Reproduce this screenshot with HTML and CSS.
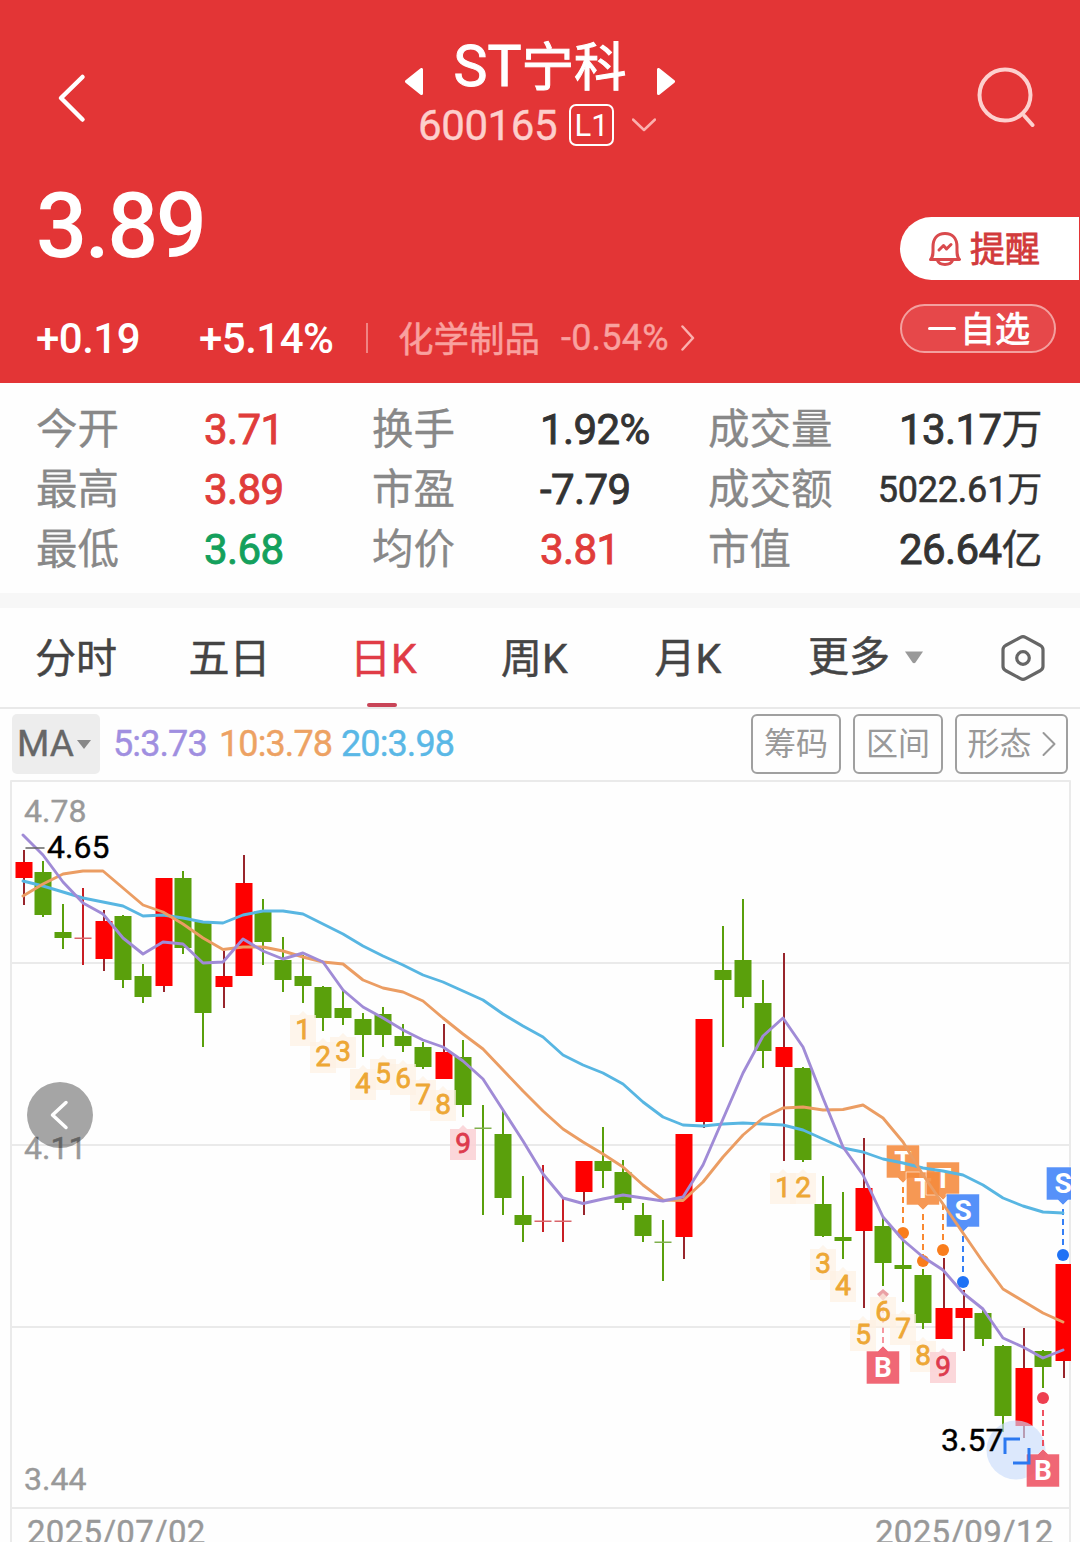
FILE: index.html
```html
<!DOCTYPE html>
<html lang="zh-CN">
<head>
    <meta charset="UTF-8">
    <meta name="viewport" content="width=device-width, initial-scale=1.0">
    <title>ST宁科 600165</title>
    <link rel="stylesheet" href="styles.css">
</head>
<body>
    <header class="header">
        <div class="topbar">
            <svg class="back" width="32" height="52" viewBox="0 0 32 52"><path d="M27.500 5 L6 26 L27.500 47.500"/></svg>
            <div class="stock">
                <div class="stock-name">
                    <svg class="arrow" width="18" height="27" viewBox="0 0 18 27"><path d="M16.500 1.500 V25.500 L1.500 13.500 Z"/></svg>
                    <h1>ST<span>宁科</span></h1>
                    <svg class="arrow" width="18" height="27" viewBox="0 0 18 27"><path d="M1.500 1.500 V25.500 L16.500 13.500 Z"/></svg>
                </div>
                <div class="stock-code">
                    <span class="code">600165</span>
                    <span class="level">L1</span>
                    <svg class="down" width="24" height="14" viewBox="0 0 24 14"><path d="M1 1.500 L12 12 L23 1.500"/></svg>
                </div>
            </div>
            <svg class="search" width="62" height="62" viewBox="0 0 62 62"><circle cx="29" cy="30" r="25.500"/><path d="M48.500 51 L56.500 60"/></svg>
        </div>

        <div class="quote">
            <div class="quote-left">
                <div class="price">3.89</div>
                <div class="changes">
                    <span class="change">+0.19</span>
                    <span class="percent">+5.14%</span>
                    <i class="divider"></i>
                    <span class="industry">化学制品</span>
                    <span class="industry-change">-0.54%</span>
                    <svg class="more" width="14" height="26" viewBox="0 0 14 26"><path d="M1.500 1.500 L12 13 L1.500 24.500"/></svg>
                </div>
            </div>
            <div class="quote-right">
                <div class="remind">
                    <svg width="34" height="36" viewBox="0 0 34 36">
                        <path d="M2.500 28.500 C5.500 25.500 5 22 5 16 C5 7.500 9.500 2.500 17 2.500 C24.500 2.500 29 7.500 29 16 C29 22 28.500 25.500 31.500 28.500 Z"/>
                        <path d="M9.500 29.500 C11.500 34.700 22.500 34.700 24.500 29.500"/>
                        <path d="M11 19 L15.500 14.500 L18.500 18 L23 13.500"/>
                    </svg>
                    <span>提醒</span>
                </div>
                <div class="favorite"><i></i><span>自选</span></div>
            </div>
        </div>
    </header>

    <section class="stats">
        <span class="label">今开</span><span class="value up">3.71</span>
        <span class="label">换手</span><span class="value">1.92%</span>
        <span class="label">成交量</span><span class="value last">13.17<b>万</b></span>
        <span class="label">最高</span><span class="value up">3.89</span>
        <span class="label">市盈</span><span class="value">-7.79</span>
        <span class="label">成交额</span><span class="value last small">5022.61<b>万</b></span>
        <span class="label">最低</span><span class="value fall">3.68</span>
        <span class="label">均价</span><span class="value up">3.81</span>
        <span class="label">市值</span><span class="value last">26.64<b>亿</b></span>
    </section>

    <nav class="tabs">
        <span class="tab">分时</span>
        <span class="tab">五日</span>
        <span class="tab active">日K</span>
        <span class="tab">周K</span>
        <span class="tab">月K</span>
        <span class="tab tab-more">更多<svg width="22" height="15" viewBox="0 0 22 15"><path d="M2 1.500 H20 L12.500 12.500 Q11 14 9.500 12.500 Z"/></svg></span>
        <svg class="setting" width="46" height="50" viewBox="0 0 46 50">
            <path d="M20.500 4.400 Q23 3 25.500 4.400 L40.500 12.500 Q43 14 43 16.700 V33.300 Q43 36 40.500 37.500 L25.500 45.600 Q23 47 20.500 45.600 L5.500 37.500 Q3 36 3 33.300 V16.700 Q3 14 5.500 12.500 Z"/>
            <circle cx="23" cy="25" r="6.300"/>
        </svg>
    </nav>

    <section class="indicator">
        <div class="ma-select">MA<svg width="14" height="9" viewBox="0 0 14 9"><path d="M0 0 H14 L7 9 Z"/></svg></div>
        <span class="ma ma5">5:3.73</span>
        <span class="ma ma10">10:3.78</span>
        <span class="ma ma20">20:3.98</span>
        <div class="tools">
            <span class="tool">筹码</span>
            <span class="tool">区间</span>
            <span class="tool tool-wide">形态<svg width="14" height="26" viewBox="0 0 14 26"><path d="M1.500 2 L12.500 13 L1.500 24"/></svg></span>
        </div>
    </section>

    <svg class="chart" id="chart" width="1080" height="764" viewBox="0 778 1080 764"></svg>

    <script src="chart.js"></script>
</body>
</html>
```
FILE: styles.css
```css
body {
    margin: 0;
    width: 1080px;
    height: 1542px;
    overflow: hidden;
    background-color: #fefefe;
    color: #333;
    font-family: Roboto, "Noto Sans CJK SC", sans-serif;
}

svg {
    display: block;
    flex: none;
    fill: none;
    stroke-linecap: round;
    stroke-linejoin: round;
}

/* header */
.header {
    height: 383px;
    background-color: #e33536;
    color: #fff;
}

.topbar {
    display: flex;
    justify-content: space-between;
    height: 180px;
    padding: 0 42px 0 55px;
}

.back {
    margin-top: 72px;
    stroke: #fff;
    stroke-width: 4.5;
}

.stock {
    width: 270px;
    padding: 37px 0 0 17px;
}

.stock-name {
    display: flex;
    justify-content: space-between;
    height: 60px;
}

.arrow {
    margin-top: 31px;
    fill: #fff;
    stroke: #fff;
    stroke-width: 3;
}

h1 {
    margin: 0;
    font-size: 57px;
    font-weight: 400;
    line-height: 60px;
    white-space: nowrap;
    -webkit-text-stroke: 1px currentColor;
}

h1 span {
    font-size: 52.5px;
}

.stock-code {
    display: flex;
    align-items: center;
    height: 44px;
    margin-top: 6px;
    padding-left: 13px;
}

.code {
    width: 151px;
    font-size: 42px;
    letter-spacing: -0.4px;
    color: #fdcfcc;
    -webkit-text-stroke: 0.4px currentColor;
}

.level {
    box-sizing: border-box;
    width: 45px;
    height: 42px;
    border: 2px solid #fff;
    border-radius: 7px;
    font-size: 31px;
    line-height: 40px;
    text-align: center;
}

.down {
    margin-left: 18px;
    stroke: #fbb0ae;
    stroke-width: 2.5;
}

.search {
    margin-top: 65px;
    stroke: #fdd0ce;
    stroke-width: 4;
}

.quote {
    display: flex;
    justify-content: space-between;
}

.quote-left {
    padding-left: 36px;
}

.price {
    height: 92px;
    padding-top: 1px;
    box-sizing: border-box;
    font-size: 90px;
    font-weight: 500;
    line-height: 92px;
    letter-spacing: -2.5px;
}

.changes {
    display: flex;
    align-items: center;
    height: 44px;
    margin-top: 44px;
    font-size: 42px;
    font-weight: 500;
    letter-spacing: -0.5px;
}

.change {
    width: 163px;
}

.percent {
    width: 167px;
}

.divider {
    width: 2px;
    height: 30px;
    background-color: #f08483;
}

.industry {
    width: 163px;
    margin: -4px 0 0 30px;
    font-size: 35.5px;
    font-weight: 400;
    letter-spacing: 0;
    color: #f9a19f;
    -webkit-text-stroke: 0.5px currentColor;
}

.industry-change {
    width: 120px;
    font-size: 36px;
    font-weight: 400;
    letter-spacing: 0.2px;
    color: #f9a19f;
    -webkit-text-stroke: 0.4px currentColor;
}

.more {
    stroke: #fbb0ae;
    stroke-width: 2.5;
}

.quote-right {
    width: 180px;
    padding-top: 37px;
}

.remind {
    display: flex;
    align-items: center;
    box-sizing: border-box;
    width: 179px;
    height: 63px;
    padding-left: 28px;
    border-radius: 32px 0 0 32px;
    background-color: #fff;
    color: #d23a3b;
    font-size: 35px;
}

.remind svg {
    margin-right: 8px;
    stroke: #d94a4d;
    stroke-width: 3;
}

.remind span,
.favorite span {
    margin-top: -4px;
    -webkit-text-stroke: 0.8px currentColor;
}

.favorite {
    display: flex;
    align-items: center;
    box-sizing: border-box;
    width: 156px;
    height: 49px;
    margin-top: 24px;
    padding-left: 26px;
    border: 2px solid #f3a09f;
    border-radius: 25px;
    background-color: #e6484a;
    font-size: 35px;
}

.favorite i {
    width: 28px;
    height: 3px;
    margin-right: 4px;
    border-radius: 2px;
    background-color: #fff;
}

/* stats */
.stats {
    display: grid;
    grid-template-columns: 168px 168px 168px 168px 172px 162px;
    grid-auto-rows: 60px;
    align-items: center;
    height: 193px;
    padding: 17px 0 0 36px;
    border-bottom: 15px solid #f7f7f7;
    background-color: #fefefe;
}

.stats span {
    height: 60px;
    line-height: 60px;
    white-space: nowrap;
}

.label {
    font-size: 41.5px;
    color: #888;
    -webkit-text-stroke: 0.3px currentColor;
}

.value {
    font-size: 42px;
    color: #333;
    letter-spacing: -0.6px;
    -webkit-text-stroke: 0.9px currentColor;
}

.value b {
    font-size: 41px;
    font-weight: 400;
    -webkit-text-stroke: 0.4px currentColor;
}

.last {
    justify-self: end;
}

.small {
    font-size: 36px;
    letter-spacing: -0.2px;
    -webkit-text-stroke-width: 0.6px;
}

.small b {
    font-size: 35px;
}

.up {
    color: #e03c3a;
}

.fall {
    color: #14a05c;
}

/* tabs */
.tabs {
    display: flex;
    height: 99px;
    padding-left: 35px;
    border-bottom: 2px solid #e9e9e9;
    color: #444;
    font-size: 41px;
    -webkit-text-stroke: 0.5px currentColor;
}

.tab {
    width: 153.5px;
    line-height: 103px;
    white-space: nowrap;
}

.active {
    display: flex;
    flex-direction: column;
    width: 151px;
    margin-left: 8px;
    height: 99px;
    color: #e03c46;
}

.active::after {
    content: "";
    flex: none;
    width: 30px;
    height: 4px;
    margin: -8px 0 0 17px;
    border-radius: 2px;
    background-color: #c94558;
}

.tab-more {
    display: flex;
    align-items: center;
    width: 190px;
}

.tab-more svg {
    margin-left: 13px;
    margin-top: -1px;
    fill: #999;
}

.setting {
    margin: 25px 0 0 2px;
    stroke: #666;
    stroke-width: 3.2;
}

/* indicator */
.indicator {
    display: flex;
    height: 64px;
    padding: 5px 12px 0;
    line-height: 60px;
}

.ma-select {
    display: flex;
    align-items: center;
    width: 83px;
    height: 60px;
    margin-right: 13px;
    padding-left: 5px;
    border-radius: 5px;
    background-color: #ededed;
    color: #666;
    font-size: 37px;
    -webkit-text-stroke: 0.4px currentColor;
}

.ma-select svg {
    margin-left: 3px;
    fill: #888;
}

.ma {
    font-size: 36px;
    letter-spacing: -0.9px;
    -webkit-text-stroke: 0.4px currentColor;
}

.ma5 {
    width: 106px;
    color: #a08fe0;
}

.ma10 {
    width: 122px;
    color: #eda263;
}

.ma20 {
    color: #5ab8e6;
}

.tools {
    display: flex;
    gap: 12px;
    margin-left: auto;
}

.tool {
    display: flex;
    align-items: center;
    justify-content: center;
    box-sizing: border-box;
    width: 90px;
    height: 60px;
    border: 2px solid #a0a0a0;
    border-radius: 6px;
    color: #999;
    font-size: 32px;
}

.tool-wide {
    width: 113px;
}

.tool svg {
    margin-left: 10px;
    stroke: #999;
    stroke-width: 2;
}

/* chart */
.chart text {
    font-size: 32px;
    fill: #999;
    stroke: #999;
    stroke-width: 0.4px;
}

.chart .grid {
    stroke: #eaeaea;
    stroke-width: 2;
}

.chart .extreme {
    fill: #000;
    stroke: #000;
}

.chart .date {
    font-size: 33px;
    letter-spacing: 0.3px;
}

.chart .count {
    font-size: 28px;
    fill: #eda735;
    stroke: #eda735;
    stroke-width: 0.8px;
    text-anchor: middle;
}

.chart .count.nine {
    fill: #dd3b4d;
    stroke: #dd3b4d;
}

.chart .flag {
    font-size: 28px;
    font-weight: 700;
    fill: #fff;
    stroke: none;
    text-anchor: middle;
}

.chart .line {
    stroke-width: 2.9;
}
```
FILE: chart.js
```js
// [color, body top, body bottom, high, low]
const candles = [
    ['r', 862, 878, 850, 905], ['g', 872, 915, 861, 917], ['g', 932, 938, 904, 949],
    ['r', 938, 938, 888, 965], ['r', 921, 959, 910, 971], ['g', 916, 980, 915, 988],
    ['g', 976, 997, 964, 1003], ['r', 878, 986, 878, 992], ['g', 878, 948, 871, 954],
    ['g', 922, 1013, 921, 1047], ['r', 976, 987, 951, 1008], ['r', 883, 976, 855, 976],
    ['g', 911, 942, 899, 965], ['g', 960, 980, 937, 992], ['g', 976, 986, 955, 1003],
    ['g', 987, 1018, 986, 1031], ['g', 1008, 1018, 990, 1025], ['g', 1019, 1035, 1013, 1057],
    ['g', 1014, 1035, 1007, 1047], ['g', 1036, 1046, 1024, 1052], ['g', 1047, 1067, 1042, 1069],
    ['r', 1052, 1079, 1024, 1079], ['g', 1057, 1105, 1040, 1117], ['g', 1128, 1128, 1105, 1215],
    ['g', 1134, 1198, 1110, 1215], ['g', 1215, 1225, 1176, 1242], ['r', 1221, 1221, 1165, 1232],
    ['r', 1221, 1221, 1198, 1242], ['r', 1161, 1192, 1161, 1215], ['g', 1161, 1171, 1127, 1188],
    ['g', 1172, 1203, 1160, 1210], ['g', 1215, 1236, 1203, 1242], ['g', 1242, 1242, 1220, 1281],
    ['r', 1134, 1237, 1134, 1259], ['r', 1019, 1122, 1019, 1128], ['g', 970, 980, 926, 1047],
    ['g', 960, 997, 899, 1008], ['g', 1003, 1051, 980, 1068], ['r', 1047, 1067, 953, 1161],
    ['g', 1068, 1160, 1067, 1162], ['g', 1204, 1236, 1176, 1237], ['g', 1237, 1241, 1192, 1259],
    ['r', 1188, 1231, 1138, 1308], ['g', 1226, 1263, 1218, 1286], ['g', 1265, 1269, 1240, 1302],
    ['g', 1275, 1323, 1269, 1329], ['r', 1308, 1339, 1258, 1339], ['r', 1308, 1318, 1290, 1351],
    ['g', 1313, 1339, 1310, 1346], ['g', 1346, 1416, 1345, 1432], ['r', 1368, 1426, 1328, 1438],
    ['g', 1351, 1367, 1350, 1388], ['r', 1264, 1361, 1264, 1378]
];

const ma5 = [835, 855, 882, 903, 914, 938, 954, 942, 944, 963, 962, 939, 951, 959, 953, 962, 990, 1007,
    1018, 1030, 1040, 1047, 1061, 1079, 1110, 1141, 1174, 1198, 1203.5, 1199, 1195, 1198, 1201, 1197, 1165,
    1119, 1073, 1036, 1018, 1047, 1098, 1147, 1175, 1217, 1240, 1257, 1270, 1293, 1309, 1338, 1347, 1358, 1350];
const ma10 = [896, 884, 874, 871, 871, 888, 905, 912, 924, 938, 949.5, 947, 947, 951, 957, 962, 964, 980,
    988, 992, 1001, 1018, 1034, 1049, 1070, 1091, 1111, 1129, 1142, 1154, 1167, 1185, 1200, 1200.5, 1182,
    1157, 1135, 1118, 1108, 1107, 1110, 1109.5, 1105, 1118, 1142, 1175, 1204, 1233, 1262, 1289, 1301, 1313, 1322];
const ma20 = [881, 886, 892, 898, 902, 906, 916, 915, 918, 922, 923, 915, 911, 911, 914, 924, 934, 946,
    956, 965, 975, 982, 991, 1000, 1014, 1026, 1037, 1055, 1065, 1073, 1084, 1102, 1117, 1125, 1126,
    1124, 1123, 1124, 1125, 1130, 1139, 1148, 1152, 1159, 1163, 1168, 1171, 1175, 1185, 1198, 1206, 1212, 1213];

// [candle index, number, center y]
const counts = [
    [14, 1, 1029], [15, 2, 1056], [16, 3, 1051], [17, 4, 1083], [18, 5, 1073], [19, 6, 1078],
    [20, 7, 1094], [21, 8, 1104], [22, 9, 1143], [38, 1, 1187], [39, 2, 1187], [40, 3, 1263],
    [41, 4, 1285], [42, 5, 1334], [43, 6, 1311], [44, 7, 1328], [45, 8, 1355], [46, 9, 1366]
];

// [candle index, letter, box top, dot y]
const flags = [
    [44, 'T', 1145, 1233], [45, 'T', 1172, 1261], [46, 'T', 1162, 1250],
    [47, 'S', 1194, 1282], [52, 'S', 1167, 1255],
    [43, 'B', 1351, 1295], [51, 'B', 1454, 1398]
];

const x = i => 23 + 20 * i;

function drawGrid() {
    let html = '<rect x="11" y="781" width="1059" height="800" fill="#fefefe" class="grid"/>';
    [963, 1145, 1327, 1508].forEach(y => {
        html += `<path class="grid" d="M11 ${y} H1070"/>`;
    });
    return html;
}

function drawCandle([color, top, bottom, high, low], i) {
    const red = color === 'r';
    const doji = top === bottom;
    const cx = x(i) + (red && !doji ? 1 : 0);
    const wick = red ? (doji ? '#c81e24' : '#98252c') : '#5aa00c';
    let html = `<rect x="${cx - 1}" y="${high}" width="2" height="${low - high}" fill="${wick}"/>`;
    if (doji) {
        html += `<rect x="${cx - 8.5}" y="${top - 0.5}" width="17" height="1.5" fill="${red ? '#d9656a' : '#7faf4d'}"/>`;
    } else {
        html += `<rect x="${cx - 8.5}" y="${top}" width="17" height="${bottom - top}" fill="${red ? '#fe0000' : '#5aa00c'}"/>`;
    }
    return html;
}

function drawLine(values, color) {
    const points = values.map((y, i) => `${x(i)},${y}`).join(' ');
    return `<polyline class="line" points="${points}" stroke="${color}"/>`;
}

function drawCount([i, n, y]) {
    const nine = n === 9;
    const cx = x(i);
    return `<path d="M${cx - 13} ${y - 14} H${cx - 4} L${cx} ${y - 18} L${cx + 4} ${y - 14} H${cx + 13} V${y + 17} H${cx - 13} Z"
        fill="${nine ? '#fbd3d6' : '#fdf1e2'}" fill-opacity="${nine ? 0.9 : 0.7}"/>
        <text class="count ${nine ? 'nine' : ''}" x="${cx}" y="${y + 10}">${n}</text>`;
}

function drawFlag([i, letter, top, dot]) {
    const cx = x(i);
    const colors = { T: ['#f58a3c', '#f97d1c'], S: ['#3f82f8', '#1f72f5'], B: ['#ee5262', '#ee3f50'] };
    const [box, point] = colors[letter];
    const l = cx - 16.5, r = cx + 16.5, b = top + 33;
    let shape, dash;
    if (letter === 'B') {
        shape = `M${l} ${top} H${cx - 5} L${cx} ${top - 5} L${cx + 5} ${top} H${r} V${b} H${l} Z`;
        dash = `M${cx} ${dot + 12} V${top - 6}`;
    } else {
        shape = `M${l} ${top} H${r} V${b} H${cx + 5} L${cx} ${b + 5} L${cx - 5} ${b} H${l} Z`;
        dash = `M${cx} ${b + 9} V${dot - 6}`;
    }
    const faded = i === 43;
    return `<path d="${dash}" stroke="${point}" stroke-width="1.8" stroke-dasharray="6 4" stroke-linecap="butt" ${faded ? 'opacity="0.6"' : ''}/>
        ${faded
            ? `<path d="M${cx - 6} ${dot - 1} L${cx} ${dot - 6} L${cx + 6} ${dot - 1} L${cx} ${dot + 6} Z" fill="#eaa0a4"/>`
            : `<circle cx="${cx}" cy="${dot}" r="6" fill="${point}"/>`}
        <path d="${shape}" fill="${box}" fill-opacity="0.88" stroke="#fff" stroke-width="0.8" stroke-opacity="0.7"/>
        <text class="flag" x="${cx}" y="${top + 26}">${letter}</text>`;
}

function drawLabels() {
    return `
        <text x="24" y="822">4.78</text>
        <text x="24" y="1159">4.11</text>
        <text x="24" y="1490">3.44</text>
        <text class="date" x="27" y="1544">2025/07/02</text>
        <text class="date" x="875" y="1544">2025/09/12</text>
        <path d="M26 848 H44" stroke="#666" stroke-width="1.5"/>
        <text class="extreme" x="47" y="858">4.65</text>
        <text class="extreme" x="941" y="1451">3.57</text>`;
}

function drawChart() {
    document.getElementById('chart').innerHTML = `
        <clipPath id="area"><rect x="10" y="780" width="1061" height="762"/></clipPath>
        ${drawGrid()}
        <g clip-path="url(#area)">
            ${candles.map(drawCandle).join('')}
            <circle cx="1016" cy="1450" r="29.500" fill="#c9dbfb" fill-opacity="0.65"/>
            ${flags.map(drawFlag).join('')}
            ${counts.map(drawCount).join('')}
            ${drawLine(ma20, '#58b6e2')}
            ${drawLine(ma10, '#eb9d63')}
            ${drawLine(ma5, '#a08bd6')}
        </g>
        ${drawLabels()}
        <path d="M1005 1454 V1439 H1020 M1013 1463 H1029 V1448" stroke="#2b78f0" stroke-width="3" stroke-linecap="butt" stroke-linejoin="miter"/>
        <circle cx="60" cy="1115" r="33" fill="#000" fill-opacity="0.35"/>
        <path d="M66 1102.500 L52.500 1115 L66 1127.500" stroke="#fff" stroke-width="3.500"/>`;
}

drawChart();
```
